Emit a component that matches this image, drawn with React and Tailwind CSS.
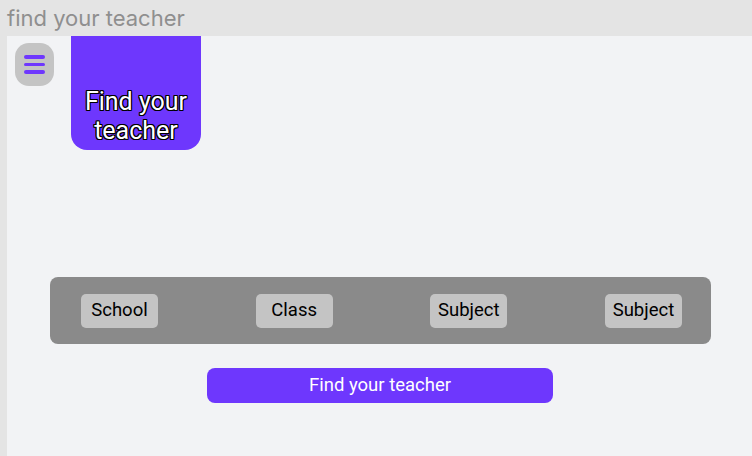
export default function App() {
  const filters = ['School', 'Class', 'Subject', 'Subject']

  return (
    <div className="w-[752px] h-[456px] flex flex-col bg-[#e4e4e4] overflow-hidden" style={{ fontFamily: 'Roboto, sans-serif' }}>
      <div className="h-[36px] shrink-0 pl-[7px] flex items-center text-[22px] text-[#8f8f8f]" style={{ fontFamily: 'Inter, sans-serif' }}>
        find your teacher
      </div>
      <div className="flex-1 ml-[7px] bg-[#f2f3f5] flex flex-col">
        <div className="flex items-start">
          <button className="mt-[7px] ml-[8px] w-[39px] h-[43px] rounded-[14px] bg-[#c4c4c4] flex flex-col items-center justify-center gap-[4px]">
            <span className="w-[21px] h-[3.5px] rounded-full bg-[#6e37fd]" />
            <span className="w-[21px] h-[3.5px] rounded-full bg-[#6e37fd]" />
            <span className="w-[21px] h-[3.5px] rounded-full bg-[#6e37fd]" />
          </button>
          <div className="ml-[17px] w-[130px] h-[114px] rounded-b-[16px] bg-[#6e37fd] flex items-end justify-center pb-[5px]">
            <p
              className="text-center text-white text-[25px] leading-[29px]"
              style={{ textShadow: '1px 0 0 #000, -1px 0 0 #000, 0 1px 0 #000, 0 -1px 0 #000, 1px 1px 0 #000, -1px -1px 0 #000, 1px -1px 0 #000, -1px 1px 0 #000' }}
            >
              Find your<br />teacher
            </p>
          </div>
        </div>

        <div className="mt-[127px] ml-[43px] w-[661px] h-[67px] rounded-[8px] bg-[#8a8a8a] flex items-center justify-between pl-[31px] pr-[29px]">
          {filters.map((f, i) => (
            <div key={i} className="w-[77px] h-[34px] rounded-[5px] bg-[#c4c4c4] flex items-center justify-center text-[18.5px] text-black">
              {f}
            </div>
          ))}
        </div>

        <button className="mt-[24px] ml-[200px] w-[346px] h-[35px] rounded-[8px] bg-[#6e37fd] text-white text-[18.5px] flex items-center justify-center">
          Find your teacher
        </button>
      </div>
    </div>
  )
}
